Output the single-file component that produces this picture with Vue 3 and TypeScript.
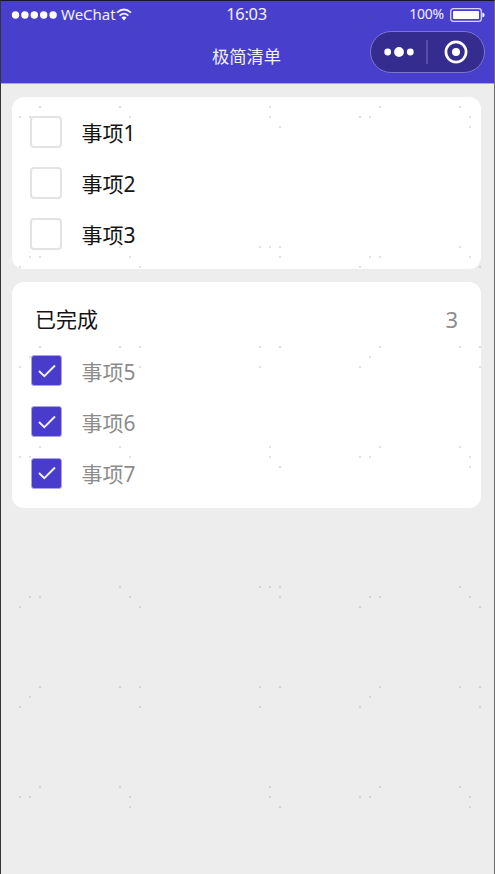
<script setup lang="ts">
import { ref, computed } from 'vue'

interface Item {
  id: number
  title: string
  done: boolean
}

const items = ref<Item[]>([
  { id: 1, title: '事项1', done: false },
  { id: 2, title: '事项2', done: false },
  { id: 3, title: '事项3', done: false },
  { id: 5, title: '事项5', done: true },
  { id: 6, title: '事项6', done: true },
  { id: 7, title: '事项7', done: true },
])

const pending = computed(() => items.value.filter((item) => !item.done))
const finished = computed(() => items.value.filter((item) => item.done))

function toggle(item: Item) {
  item.done = !item.done
}

// Speckle texture laid over the page: [y, x positions]
const speckles: [number, number[]][] = [
  [7, [140, 380]],
  [17, [370]],
  [27, [20, 140, 260, 360, 480]],
  [107, [40, 120, 270, 380, 460]],
  [117, [20, 30, 130, 270, 360, 370, 470]],
  [127, [280, 470]],
  [247, [120, 260, 270, 280, 460]],
  [257, [30, 40, 130, 280, 370, 380, 470]],
  [267, [20, 140, 360, 480]],
  [347, [40, 120, 140, 260, 280, 380, 460, 480]],
  [357, [30, 370]],
  [367, [20, 140, 260, 360, 480]],
  [447, [40, 120, 270, 380, 460]],
  [457, [20, 30, 130, 270, 360, 370, 470]],
  [467, [280, 470]],
  [587, [120, 260, 270, 280, 460]],
  [597, [30, 40, 130, 280, 370, 380, 470]],
  [607, [20, 140, 360, 480]],
  [687, [40, 120, 140, 260, 280, 380, 460, 480]],
  [697, [30, 370]],
  [707, [20, 140, 260, 360, 480]],
  [787, [40, 120, 270, 380, 460]],
  [797, [20, 30, 130, 270, 360, 370, 470]],
  [807, [130, 280, 470]],
]
const specklePath = speckles
  .map(([y, xs]) => xs.map((x) => `M${x - 1} ${y - 1}h2v2h-2z`).join(''))
  .join('')
</script>

<template>
  <div class="phone">
    <header class="header">
      <div class="status">
        <div class="carrier">
          <svg class="signal" width="46" height="8" viewBox="0 0 46 8">
            <circle v-for="n in 5" :key="n" :cx="4.5 + (n - 1) * 9.4" cy="4" r="3.7" />
          </svg>
          <span class="carrier-name">WeChat</span>
          <svg class="wifi" width="16" height="13" viewBox="0 0 16 13">
            <path d="M1 4.7Q8-1.7 15 4.7M3.6 7.6Q8 3.7 12.4 7.6" />
            <path class="wifi-base" d="M5.5 9.6Q8 7.6 10.5 9.6L8 12.4z" />
          </svg>
        </div>
        <span class="clock">16:03</span>
        <div class="power">
          <span>100%</span>
          <svg width="35" height="14" viewBox="0 0 35 14">
            <rect class="battery-case" x="0.7" y="0.7" width="30.6" height="12.6" rx="2.6" />
            <rect class="battery-fill" x="3" y="3" width="26" height="8" rx="1" />
            <path class="battery-fill" d="M32.4 4.5Q34.6 5 34.6 7T32.4 9.5z" />
          </svg>
        </div>
      </div>
      <div class="nav">
        <h1>极简清单</h1>
        <div class="capsule">
          <svg class="more" width="30" height="10" viewBox="0 0 30 10">
            <circle cx="3.7" cy="5" r="3.4" />
            <circle cx="15" cy="5" r="4.9" />
            <circle cx="26.3" cy="5" r="3.4" />
          </svg>
          <span class="divider"></span>
          <svg class="target" width="24" height="24" viewBox="0 0 24 24">
            <circle class="ring" cx="12" cy="12" r="10.1" />
            <circle cx="12" cy="12" r="4" />
          </svg>
        </div>
      </div>
    </header>

    <main class="content">
      <section class="card pending">
        <div v-for="item in pending" :key="item.id" class="row" @click="toggle(item)">
          <span class="box"></span>
          <span class="title">{{ item.title }}</span>
        </div>
      </section>

      <section class="card finished">
        <div class="card-head">
          <span>已完成</span>
          <span class="count">{{ finished.length }}</span>
        </div>
        <div v-for="item in finished" :key="item.id" class="row done" @click="toggle(item)">
          <span class="box">
            <svg width="20" height="16" viewBox="0 0 20 16">
              <path d="M2 8L7.3 13.2L18 2.5" />
            </svg>
          </span>
          <span class="title">{{ item.title }}</span>
        </div>
      </section>
    </main>

    <svg class="speckle" width="495" height="874" viewBox="0 0 495 874" shape-rendering="crispEdges">
      <path :d="specklePath" />
    </svg>
  </div>
</template>

<style>
body {
  margin: 0;
}
</style>

<style scoped>
.phone {
  position: relative;
  box-sizing: border-box;
  width: 495px;
  height: 874px;
  overflow: hidden;
  border-top: 1px solid #17142f;
  border-left: 1px solid #35333b;
  border-right: 1px solid #6d6d70;
  background: #ededed;
  font-family: 'Noto Sans', 'Noto Sans CJK SC', sans-serif;
  color: #141414;
}

.header {
  box-sizing: border-box;
  height: 83px;
  border-bottom: 1px solid #a9a6d8;
  background: #493fcd;
  color: #f1f0fc;
}

.status {
  display: grid;
  grid-template-columns: 1fr auto 1fr;
  align-items: center;
  height: 26px;
  padding: 0 9px 0 10px;
}

.carrier {
  display: flex;
  align-items: center;
  font-size: 15px;
  line-height: 20px;
}

.signal {
  margin-top: 1px;
  fill: #fff;
}

.carrier-name {
  margin-left: 4px;
}

.wifi {
  margin-top: 1px;
  fill: none;
  stroke: #f1f0fc;
  stroke-width: 1.7;
}

.wifi-base {
  fill: #fff;
  stroke: none;
}

.clock {
  margin-right: 3px;
  font-size: 16.5px;
  line-height: 20px;
  letter-spacing: -0.3px;
}

.power {
  display: flex;
  align-items: center;
  justify-content: flex-end;
  gap: 6px;
  font-size: 14px;
  line-height: 20px;
  letter-spacing: -0.2px;
}

.power svg {
  margin-top: 2px;
}

.battery-case {
  fill: none;
  stroke: #d9d6f8;
  stroke-width: 1.3;
}

.battery-fill {
  fill: #fff;
}

.nav {
  display: grid;
  grid-template-columns: 1fr auto 1fr;
  align-items: center;
  height: 49px;
  padding-right: 9px;
  padding-left: 7px;
}

h1 {
  grid-column: 2;
  margin: 11px 0 0;
  font-size: 17.3px;
  font-weight: 400;
  line-height: 24px;
}

.capsule {
  display: flex;
  align-items: center;
  justify-self: end;
  box-sizing: border-box;
  width: 115px;
  height: 42px;
  border: 1px solid #7b74cf;
  border-radius: 21px;
  background: #352c90;
}

.more {
  margin-left: 13px;
  fill: #fff;
}

.divider {
  width: 2px;
  height: 24px;
  margin-left: 12px;
  background: #554da8;
}

.target {
  margin-left: 16px;
  fill: #fff;
}

.ring {
  fill: none;
  stroke: #fff;
  stroke-width: 2.7;
}

.content {
  display: flex;
  flex-direction: column;
  gap: 13px;
  padding: 13px 13px 0 11px;
}

.card {
  box-sizing: border-box;
  border-radius: 12px;
  background: #fff;
}

.pending {
  height: 172px;
  padding: 9px 18px;
}

.finished {
  height: 226px;
  padding: 11px 18px;
}

.card-head {
  display: flex;
  align-items: center;
  justify-content: space-between;
  height: 52px;
  padding: 0 5px;
  font-size: 21px;
  line-height: 30px;
}

.count {
  font-size: 22px;
  color: #8d8d8d;
}

.row {
  display: flex;
  align-items: center;
  height: 51.3px;
}

.box {
  display: flex;
  align-items: center;
  justify-content: center;
  box-sizing: border-box;
  width: 32px;
  height: 32px;
  border: 2px solid #e2e3e5;
  border-radius: 4px;
  background: #fff;
}

.title {
  margin: 2px 0 0 19.6px;
  font-size: 21px;
  line-height: 30px;
}

.done .box {
  width: 31px;
  height: 31px;
  margin-left: 1px;
  border: 1px solid #aaa5e4;
  border-radius: 3px;
  background: #493bcb;
}

.done .box svg {
  fill: none;
  stroke: #f0effd;
  stroke-width: 2;
}

.done .title {
  color: #8c8c8c;
}

.speckle {
  position: absolute;
  top: -1px;
  left: -1px;
  fill: rgba(90, 90, 90, 0.18);
  pointer-events: none;
}
</style>
